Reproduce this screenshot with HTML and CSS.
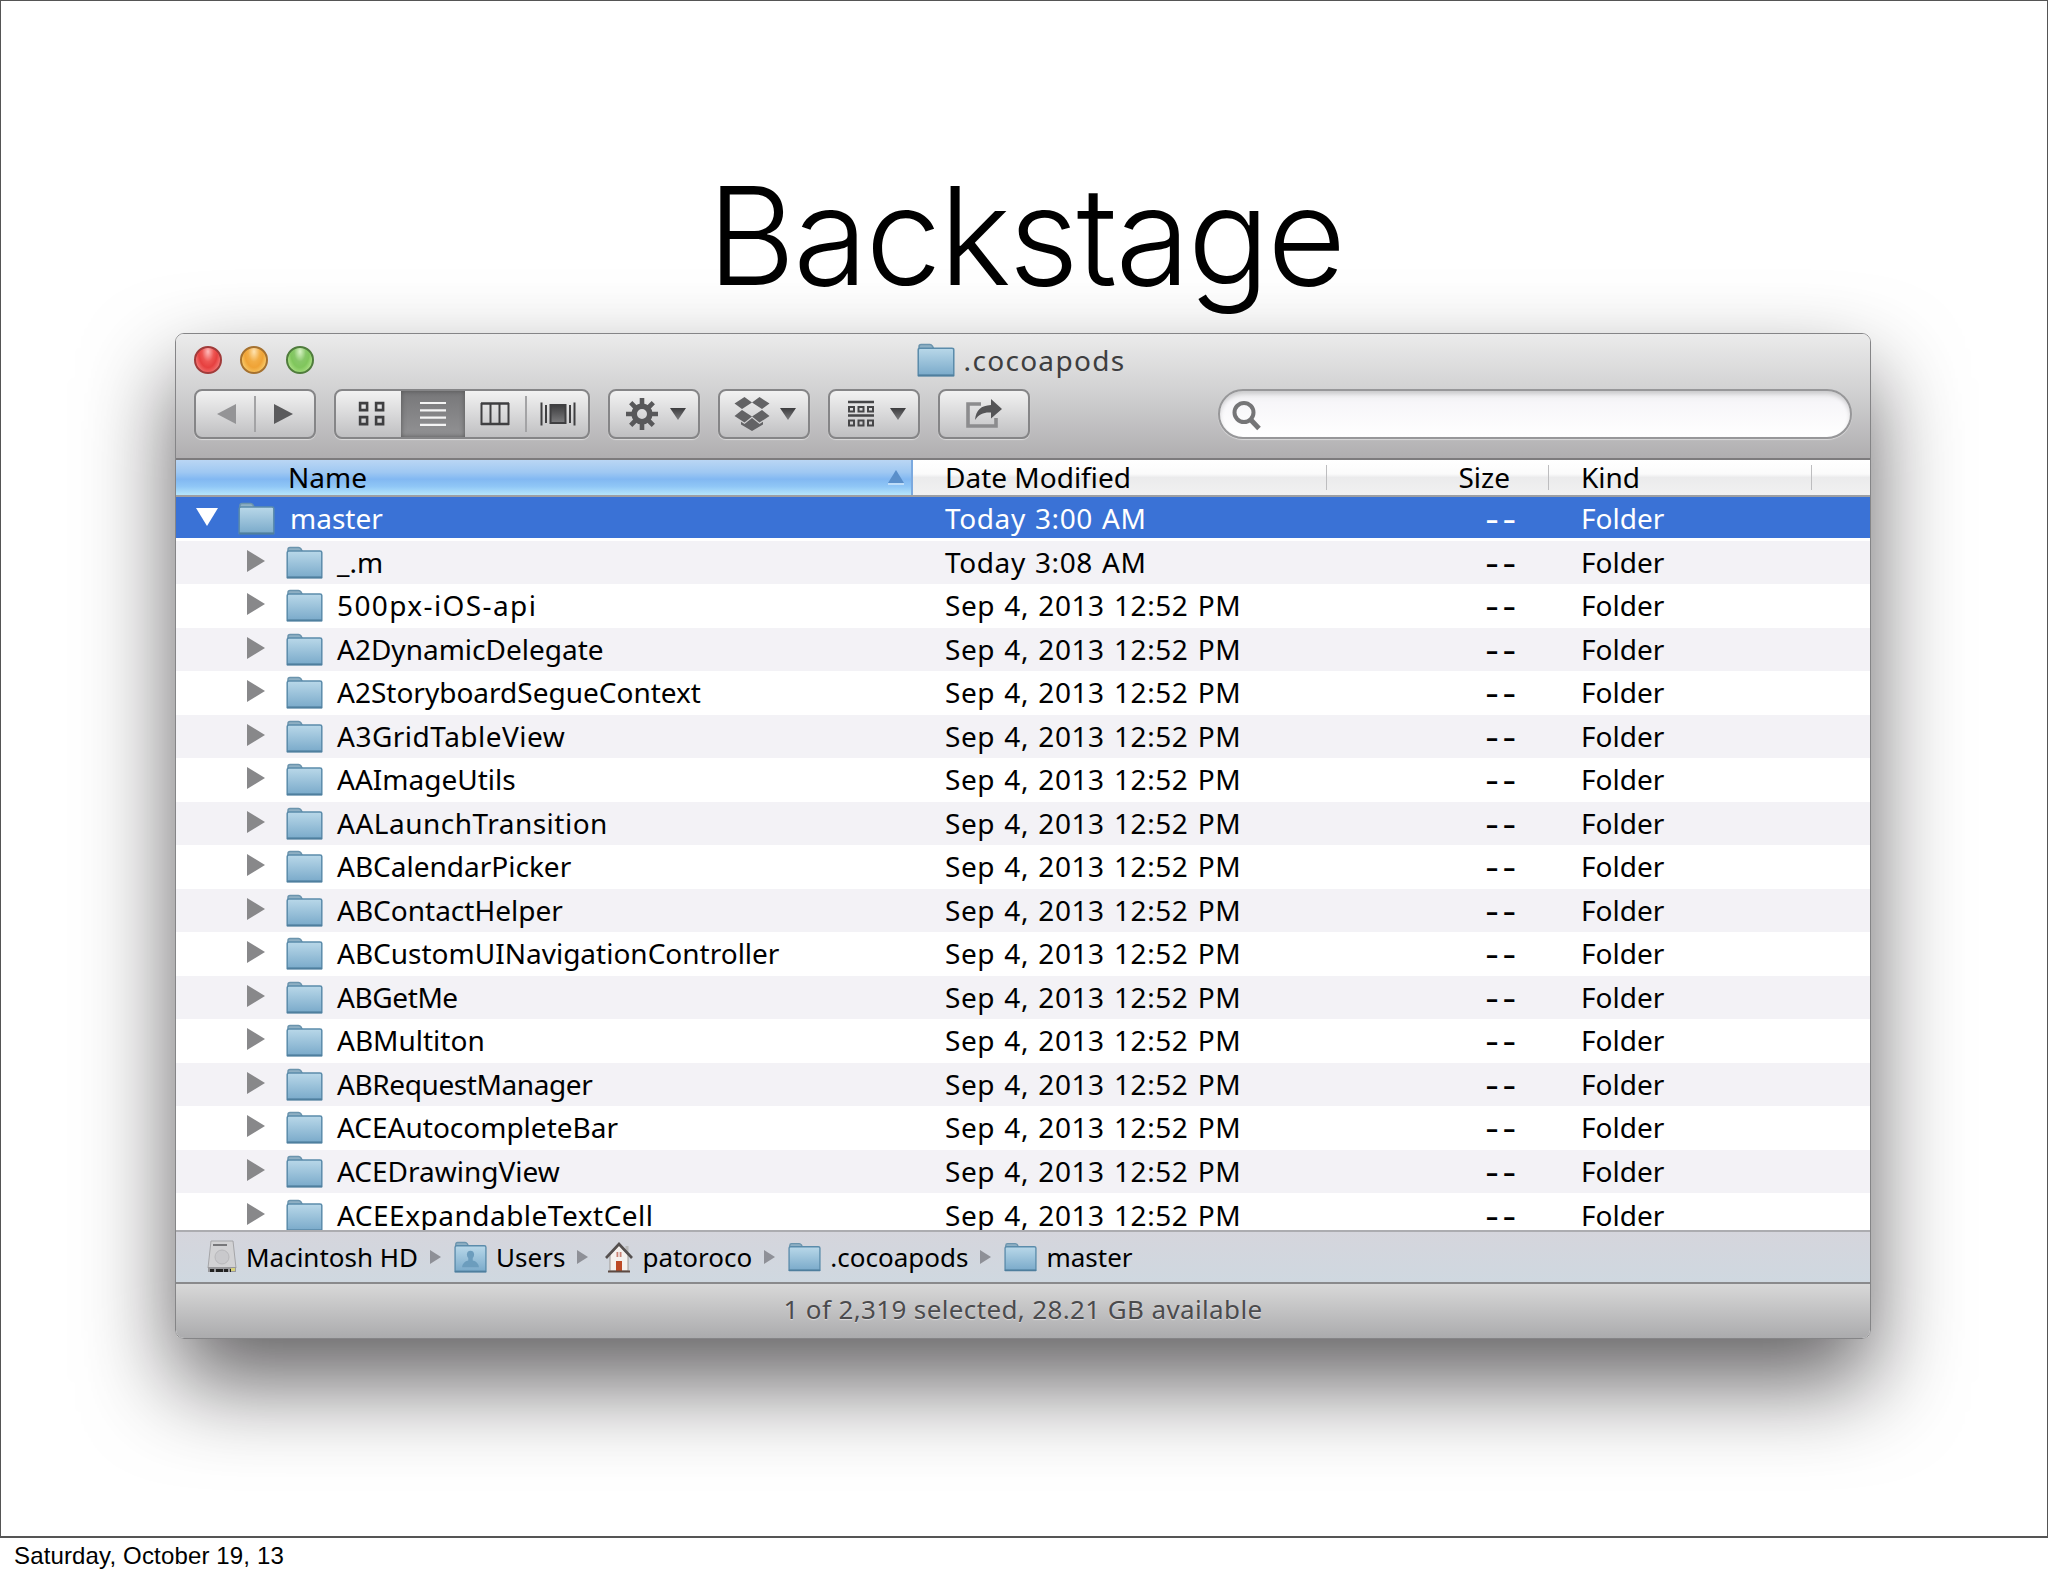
FILE: index.html
```
<!DOCTYPE html>
<html lang="en">
<head>
    <meta charset="UTF-8">
    <meta name="viewport" content="width=device-width, initial-scale=1.0">
    <title>Backstage</title>
    <link rel="stylesheet" href="styles.css">
</head>
<body>
    <!-- Shared icons -->
    <svg class="defs" width="0" height="0">
        <defs>
            <linearGradient id="folderFill" x1="0" y1="0" x2="0" y2="1">
                <stop offset="0" stop-color="#b9d8e9"/>
                <stop offset="1" stop-color="#7aaaca"/>
            </linearGradient>
            <linearGradient id="iconFill" x1="0" y1="0" x2="0" y2="1">
                <stop offset="0" stop-color="#3c3c3e"/>
                <stop offset="1" stop-color="#7c7c7e"/>
            </linearGradient>
            <symbol id="folder" viewBox="0 0 37 33">
                <path d="M2 6V3.500Q2 1.500 4 1.500H12.500Q14 1.500 15 3L16.500 6Z" fill="#8fb0c4" stroke="#6b94ad" stroke-width="1.500"/>
                <path d="M1.200 6.500Q1.200 5 3 5H34Q35.800 5 35.800 6.500V31.500H1.200Z" fill="url(#folderFill)" stroke="#5b8cab" stroke-width="1.500"/>
                <path d="M1 31.600H36" stroke="#4f7f9e" stroke-width="2"/>
            </symbol>
            <symbol id="arrow" viewBox="0 0 18 22">
                <path d="M0 0L18 11L0 22Z" fill="#88888a"/>
            </symbol>
            <symbol id="sep" viewBox="0 0 11 14">
                <path d="M0 0L11 7L0 14Z" fill="#8e9097"/>
            </symbol>
            <symbol id="drop" viewBox="0 0 16 12">
                <path d="M0 0H16L8 12Z" fill="url(#iconFill)"/>
            </symbol>
        </defs>
    </svg>

    <div class="slide">
        <h1>Backstage</h1>

        <div class="window">
            <div class="top">
                <div class="titlebar">
                    <div class="lights">
                        <span class="light red"></span>
                        <span class="light yellow"></span>
                        <span class="light green"></span>
                    </div>
                    <div class="title">
                        <svg class="folder"><use href="#folder"/></svg>
                        <span>.cocoapods</span>
                    </div>
                </div>
                <div class="toolbar">
                    <div class="group nav">
                        <span class="seg"><svg width="20" height="22"><path d="M20 1V21L1 11Z" fill="#949496"/></svg></span>
                        <span class="line"></span>
                        <span class="seg"><svg width="20" height="22"><path d="M0 1V21L19 11Z" fill="#5a5a5c"/></svg></span>
                    </div>
                    <div class="group views">
                        <span class="seg">
                            <svg width="28" height="26" fill="none" stroke="#3f3f41" stroke-width="2.600">
                                <path d="M2.100 2.100h7v7h-7zM18.100 2.100h7v7h-7zM2.100 16.100h7v7h-7zM18.100 16.100h7v7h-7z"/>
                            </svg>
                        </span>
                        <span class="seg on">
                            <svg width="28" height="26" stroke="#f4f4f4" stroke-width="2.200">
                                <path d="M1 2H27M1 9.300H27M1 16.600H27M1 23.900H27"/>
                            </svg>
                        </span>
                        <span class="seg">
                            <svg width="30" height="26" fill="none" stroke="#3f3f41" stroke-width="2">
                                <path d="M1 2.500H29M1 23H29" stroke-width="2.600"/>
                                <path d="M1.500 2V24M10.500 2V24M19.500 2V24M28.500 2V24"/>
                            </svg>
                        </span>
                        <span class="line"></span>
                        <span class="seg">
                            <svg width="36" height="26" fill="none" stroke="#3f3f41" stroke-width="2">
                                <path d="M1.500 1.500V24.500M6 4V22M30 4V22M34.500 1.500V24.500"/>
                                <rect x="10.500" y="4" width="15" height="18" fill="url(#iconFill)"/>
                            </svg>
                        </span>
                    </div>
                    <div class="group menu">
                        <svg width="34" height="34" viewBox="-17 -17 34 34">
                            <g stroke="#58585a" stroke-width="4.600">
                                <path d="M0 -16V-9M0 9V16M-16 0H-9M9 0H16"/>
                                <path d="M-11.300 -11.300L-6 -6M11.300 -11.300L6 -6M-11.300 11.300L-6 6M11.300 11.300L6 6"/>
                            </g>
                            <circle r="7.800" fill="none" stroke="#58585a" stroke-width="5.600"/>
                        </svg>
                        <svg class="drop"><use href="#drop"/></svg>
                    </div>
                    <div class="group menu dropbox">
                        <svg width="36" height="34" viewBox="0 0 36 34" fill="#636365">
                            <path d="M10.500 0L18 5.500L8 12L0.500 6.500ZM25.500 0L18 5.500L28 12L35.500 6.500ZM8 13L18 19.500L10.500 25.500L0.500 19ZM28 13L18 19.500L25.500 25.500L35.500 19ZM18 21L25.500 27L29 24.800V27.500L18 34L7 27.500V24.800L10.500 27Z"/>
                        </svg>
                        <svg class="drop"><use href="#drop"/></svg>
                    </div>
                    <div class="group menu arrange">
                        <svg width="26" height="28" fill="none" stroke="#464648" stroke-width="2">
                            <path d="M0 2H26M0 15.500H26" stroke-width="2.400"/>
                            <path d="M1 7h5v4.500h-5zM10.500 7h5v4.500h-5zM20 7h5v4.500h-5zM1 20.500h5v5h-5zM10.500 20.500h5v5h-5zM20 20.500h5v5h-5z"/>
                        </svg>
                        <svg class="drop"><use href="#drop"/></svg>
                    </div>
                    <div class="group share">
                        <svg width="40" height="32" viewBox="0 0 40 32">
                            <path d="M17 6H4V28H32V20" fill="none" stroke="#8c8c8e" stroke-width="3.600"/>
                            <path d="M11 22C12 12 17 7.500 27 7V1L38 11L27 20.500V14.500C20 14 15 16 11 22Z" fill="#555557"/>
                        </svg>
                    </div>
                    <div class="search">
                        <svg width="32" height="34" fill="none" stroke="#757577">
                            <circle cx="12" cy="12.500" r="9.500" stroke-width="4"/>
                            <path d="M18 19L27 28.500" stroke-width="5"/>
                        </svg>
                    </div>
                </div>
            </div>

            <div class="header">
                <span class="col-name">Name <svg width="16" height="15"><path d="M8 0L16 13H0Z" fill="#5a8fca"/><path d="M0 14H16" stroke="#cfe6fa" stroke-width="1.500"/></svg></span>
                <span class="col-date">Date Modified</span>
                <span class="col-size">Size</span>
                <span class="col-kind">Kind</span>
            </div>

            <div class="list">
                <div class="row selected"><svg class="arrow" viewBox="0 0 22 18"><path d="M0 0H22L11 18Z" fill="#fff"/></svg><svg class="folder"><use href="#folder"/></svg><span class="name">master</span><span class="date">Today 3:00 AM</span><span class="size">--</span><span class="kind">Folder</span></div>
                <div class="row"><svg class="arrow"><use href="#arrow"/></svg><svg class="folder"><use href="#folder"/></svg><span class="name">_.m</span><span class="date">Today 3:08 AM</span><span class="size">--</span><span class="kind">Folder</span></div>
                <div class="row"><svg class="arrow"><use href="#arrow"/></svg><svg class="folder"><use href="#folder"/></svg><span class="name wide">500px-iOS-api</span><span class="date">Sep 4, 2013 12:52 PM</span><span class="size">--</span><span class="kind">Folder</span></div>
                <div class="row"><svg class="arrow"><use href="#arrow"/></svg><svg class="folder"><use href="#folder"/></svg><span class="name">A2DynamicDelegate</span><span class="date">Sep 4, 2013 12:52 PM</span><span class="size">--</span><span class="kind">Folder</span></div>
                <div class="row"><svg class="arrow"><use href="#arrow"/></svg><svg class="folder"><use href="#folder"/></svg><span class="name">A2StoryboardSegueContext</span><span class="date">Sep 4, 2013 12:52 PM</span><span class="size">--</span><span class="kind">Folder</span></div>
                <div class="row"><svg class="arrow"><use href="#arrow"/></svg><svg class="folder"><use href="#folder"/></svg><span class="name loose">A3GridTableView</span><span class="date">Sep 4, 2013 12:52 PM</span><span class="size">--</span><span class="kind">Folder</span></div>
                <div class="row"><svg class="arrow"><use href="#arrow"/></svg><svg class="folder"><use href="#folder"/></svg><span class="name">AAImageUtils</span><span class="date">Sep 4, 2013 12:52 PM</span><span class="size">--</span><span class="kind">Folder</span></div>
                <div class="row"><svg class="arrow"><use href="#arrow"/></svg><svg class="folder"><use href="#folder"/></svg><span class="name loose">AALaunchTransition</span><span class="date">Sep 4, 2013 12:52 PM</span><span class="size">--</span><span class="kind">Folder</span></div>
                <div class="row"><svg class="arrow"><use href="#arrow"/></svg><svg class="folder"><use href="#folder"/></svg><span class="name">ABCalendarPicker</span><span class="date">Sep 4, 2013 12:52 PM</span><span class="size">--</span><span class="kind">Folder</span></div>
                <div class="row"><svg class="arrow"><use href="#arrow"/></svg><svg class="folder"><use href="#folder"/></svg><span class="name">ABContactHelper</span><span class="date">Sep 4, 2013 12:52 PM</span><span class="size">--</span><span class="kind">Folder</span></div>
                <div class="row"><svg class="arrow"><use href="#arrow"/></svg><svg class="folder"><use href="#folder"/></svg><span class="name">ABCustomUINavigationController</span><span class="date">Sep 4, 2013 12:52 PM</span><span class="size">--</span><span class="kind">Folder</span></div>
                <div class="row"><svg class="arrow"><use href="#arrow"/></svg><svg class="folder"><use href="#folder"/></svg><span class="name tight">ABGetMe</span><span class="date">Sep 4, 2013 12:52 PM</span><span class="size">--</span><span class="kind">Folder</span></div>
                <div class="row"><svg class="arrow"><use href="#arrow"/></svg><svg class="folder"><use href="#folder"/></svg><span class="name">ABMultiton</span><span class="date">Sep 4, 2013 12:52 PM</span><span class="size">--</span><span class="kind">Folder</span></div>
                <div class="row"><svg class="arrow"><use href="#arrow"/></svg><svg class="folder"><use href="#folder"/></svg><span class="name tight">ABRequestManager</span><span class="date">Sep 4, 2013 12:52 PM</span><span class="size">--</span><span class="kind">Folder</span></div>
                <div class="row"><svg class="arrow"><use href="#arrow"/></svg><svg class="folder"><use href="#folder"/></svg><span class="name">ACEAutocompleteBar</span><span class="date">Sep 4, 2013 12:52 PM</span><span class="size">--</span><span class="kind">Folder</span></div>
                <div class="row"><svg class="arrow"><use href="#arrow"/></svg><svg class="folder"><use href="#folder"/></svg><span class="name">ACEDrawingView</span><span class="date">Sep 4, 2013 12:52 PM</span><span class="size">--</span><span class="kind">Folder</span></div>
                <div class="row"><svg class="arrow"><use href="#arrow"/></svg><svg class="folder"><use href="#folder"/></svg><span class="name loose">ACEExpandableTextCell</span><span class="date">Sep 4, 2013 12:52 PM</span><span class="size">--</span><span class="kind">Folder</span></div>
            </div>

            <div class="pathbar">
                <span class="crumb hd">
                    <svg width="30" height="34" viewBox="0 0 30 34">
                        <path d="M4 1H26L29 28H1Z" fill="#d2d2d4" stroke="#a5a5a8"/>
                        <path d="M6 5H20" stroke="#77777a" stroke-width="2"/>
                        <circle cx="15" cy="17" r="7" fill="#c9c9cc" stroke="#b8b8bb"/>
                        <path d="M1 27H29V32H1Z" fill="#98989b"/>
                        <path d="M3 30.500H24" stroke="#222" stroke-width="3" stroke-dasharray="4 2 7 1"/>
                        <path d="M24 28H28V31H24Z" fill="#d8d27a"/>
                    </svg>
                    Macintosh HD
                </span>
                <svg class="sep"><use href="#sep"/></svg>
                <span class="crumb users">
                    <svg width="33" height="32" viewBox="0 0 37 33" preserveAspectRatio="none"><use href="#folder" width="37" height="33"/><circle cx="18.500" cy="14" r="4" fill="#6c9dbd"/><path d="M9 27Q10 21 16 20V17H21V20Q27 21 28 27Z" fill="#6c9dbd"/></svg>
                    Users
                </span>
                <svg class="sep"><use href="#sep"/></svg>
                <span class="crumb home">
                    <svg width="28" height="32" viewBox="0 0 28 32">
                        <path d="M5 14L14 4L23 14V30H5Z" fill="#f5f1ee" stroke="#a09a96"/>
                        <path d="M22 5V11" stroke="#b9b9b9" stroke-width="3"/>
                        <path d="M1 17L14 3L27 17" fill="none" stroke="#55504f" stroke-width="2.600"/>
                        <path d="M11.500 11H13.300V16H11.500ZM14.700 11H16.500V16H14.700Z" fill="#c98274"/>
                        <path d="M11 20H17V30H11Z" fill="#bd4a25"/>
                        <path d="M3 30.500H25" stroke="#5d4a42" stroke-width="2"/>
                    </svg>
                    patoroco
                </span>
                <svg class="sep"><use href="#sep"/></svg>
                <span class="crumb"><svg class="folder"><use href="#folder"/></svg>.cocoapods</span>
                <svg class="sep"><use href="#sep"/></svg>
                <span class="crumb"><svg class="folder"><use href="#folder"/></svg>master</span>
            </div>

            <div class="status"><span>1 of 2,319 selected, 28.21 GB available</span></div>
        </div>
    </div>

    <div class="date-line">Saturday, October 19, 13</div>
</body>
</html>
```

FILE: styles.css
```
* {
    box-sizing: border-box;
}

body {
    margin: 0;
    width: 2048px;
    height: 1576px;
    background: #fff;
    color: #000;
    font-family: "Noto Sans", "Open Sans", sans-serif;
    overflow: hidden;
}

svg {
    display: block;
    flex: none;
}

.defs {
    position: absolute;
}

.slide {
    height: 1538px;
    border: 1px solid #555;
    border-bottom-width: 2px;
    overflow: hidden;
}

h1 {
    margin: 0;
    height: 332px;
    padding: 153px 0 0 3px;
    font-family: Inter, "Liberation Sans", sans-serif;
    font-size: 136px;
    line-height: 164px;
    font-weight: 300;
    letter-spacing: -2.400px;
    text-align: center;
}

.window {
    width: 1696px;
    height: 1006px;
    margin-left: 174px;
    border: 1px solid #858587;
    border-radius: 9px;
    overflow: hidden;
    font-size: 28px;
    box-shadow: 0 44px 90px rgba(10, 6, 10, 0.63);
}

/* Title bar and toolbar */
.top {
    height: 126px;
    background: linear-gradient(#ebebeb, #cfcfd0 50%, #b0aeb0);
    border-bottom: 2px solid #7d7b7d;
}

.titlebar {
    height: 52px;
    display: grid;
    grid-template-columns: 1fr auto 1fr;
    align-items: center;
}

.lights {
    display: flex;
    gap: 18px;
    padding-left: 18px;
}

.light {
    width: 28px;
    height: 28px;
    border-radius: 50%;
    border: 2px solid;
}

.red {
    background: radial-gradient(ellipse at 50% 15%, #fbb 0, #ee5552 35%, #e6403f 55%, #ff9e9c 100%);
    border-color: #a13b3a;
}

.yellow {
    background: radial-gradient(ellipse at 50% 15%, #ffe3b0 0, #f2ad45 35%, #efa336 55%, #ffe890 100%);
    border-color: #a5712f;
}

.green {
    background: radial-gradient(ellipse at 50% 15%, #d9f3c6 0, #87c768 35%, #80c65c 55%, #cdf5a5 100%);
    border-color: #4f7c3c;
}

.title {
    display: flex;
    align-items: center;
    gap: 9px;
    padding-right: 4px;
    color: #3e3e40;
    letter-spacing: 1.300px;
}

.title .folder {
    width: 38px;
    height: 34px;
}

.toolbar {
    display: flex;
    padding: 3px 18px 0 18px;
}

.group {
    height: 50px;
    border: 2px solid #858587;
    border-radius: 8px;
    background: linear-gradient(#f2f2f2, #d9d9da 50%, #bfbfc1);
    box-shadow: 0 1px 1px rgba(255, 255, 255, 0.5);
    display: flex;
    align-items: center;
}

.seg {
    flex: 1;
    height: 100%;
    display: flex;
    align-items: center;
    justify-content: center;
}

.seg.on {
    flex: 0 0 64px;
    background: linear-gradient(#777779, #929294);
    box-shadow: inset 0 0 5px #555;
}

.line {
    width: 2px;
    height: 36px;
    background: #a3a3a5;
}

.nav {
    width: 122px;
}

.nav .seg:first-child {
    flex: 0 0 58px;
    padding-left: 1px;
}

.nav .seg:last-child {
    padding-right: 3px;
}

.views {
    width: 256px;
    margin-left: 18px;
}

.views .seg:first-child {
    flex: 0 0 65px;
    padding-left: 6px;
}

.views .seg:nth-child(3) {
    flex: 0 0 60px;
}

.menu {
    width: 92px;
    margin-left: 18px;
    padding-left: 15px;
    gap: 11px;
}

.drop {
    width: 16px;
    height: 12px;
}

.dropbox {
    padding-left: 14px;
    gap: 10px;
}

.arrange {
    padding-left: 18px;
    gap: 16px;
}

.share {
    width: 92px;
    margin-left: 18px;
    justify-content: center;
}

.search {
    width: 634px;
    height: 50px;
    margin-left: auto;
    padding: 9px 0 0 12px;
    border: 2px solid #979799;
    border-radius: 25px;
    background: linear-gradient(#ececee, #f7f6f9 25%, #fff);
    box-shadow: inset 0 3px 4px rgba(0, 0, 0, 0.15), 0 1px 1px rgba(255, 255, 255, 0.5);
}

/* Column header */
.header {
    display: grid;
    grid-template-columns: 737px 415px 222px 1fr;
    height: 37px;
    border-bottom: 2px solid #9d9fa3;
    background: linear-gradient(#fff 0, #fbfbfb 40%, #ebebec 50%, #f1f1f1);
    line-height: 35px;
}

.header span {
    position: relative;
}

.col-name {
    padding: 0 7px 0 112px;
    display: flex;
    align-items: center;
    justify-content: space-between;
    background: linear-gradient(#bad6f4, #9fc8f2 35%, #82b8f2 55%, #8fc6f6 75%, #b5e5fb);
    border-right: 2px solid #7ba9df;
}

.col-date {
    padding-left: 32px;
}

.col-size {
    padding-right: 40px;
    text-align: right;
}

.col-kind {
    padding-left: 31px;
}

/* column dividers */
.col-date::after,
.col-size::after,
.col-kind::after {
    content: "";
    position: absolute;
    right: 1px;
    top: 5px;
    width: 1.500px;
    height: 25px;
    background: #bdbdbf;
}

.col-kind::after {
    right: 58px;
}

/* File list */
.list {
    height: 733px;
    overflow: hidden;
    background: #fff;
}

.row {
    display: grid;
    grid-template-columns: 18px 39px 619px 390px 213px 1fr;
    align-items: center;
    height: 43.530px;
    padding-left: 71px;
    line-height: 43px;
    white-space: nowrap;
}

.row:nth-child(even) {
    background: #f3f2f6;
}

.row .arrow {
    width: 18px;
    height: 22px;
    margin-top: -3px;
}

.row .folder {
    width: 37px;
    height: 33px;
    margin-left: 21px;
}

.name {
    padding-left: 33px;
}

.name.wide {
    letter-spacing: 1.400px;
}

.name.loose {
    letter-spacing: 0.500px;
}

.name.tight {
    letter-spacing: -0.400px;
}

.date {
    padding-left: 22px;
    letter-spacing: 0.600px;
    word-spacing: 1.300px;
}

.size {
    padding-right: 4px;
    text-align: right;
    letter-spacing: 3px;
    font-weight: 500;
    transform: scaleX(1.450);
    transform-origin: right;
}

.kind {
    padding-left: 55px;
}

.row.selected {
    grid-template-columns: 22px 39px 666px 390px 213px 1fr;
    padding-left: 20px;
    background: linear-gradient(#3a72d6, #3a72d6) no-repeat 0 0 / 100% 41px;
    color: #fff;
}

.selected .arrow {
    width: 22px;
    height: 18px;
}

.selected .folder {
    margin-left: 20px;
}

/* Path bar */
.pathbar {
    display: flex;
    align-items: center;
    height: 54px;
    padding-left: 31px;
    border-top: 2px solid #acacb0;
    border-bottom: 2px solid #8a8a8c;
    background: linear-gradient(#d5d5dc, #cfd8e0);
    font-size: 26px;
    line-height: 50px;
}

.crumb {
    display: flex;
    align-items: center;
    gap: 9px;
}

.sep {
    width: 11px;
    height: 14px;
    margin: 0 13px 0 12px;
}

.crumb.home {
    margin-left: 4px;
}

.pathbar .folder {
    width: 33px;
    height: 32px;
}

/* Status bar */
.status {
    height: 54px;
    background: linear-gradient(#d8d8d8, #ababad);
    color: #4b4b4d;
    text-align: center;
    line-height: 51px;
    font-size: 26px;
    letter-spacing: 0.370px;
    text-shadow: 0 1px 1px rgba(255, 255, 255, 0.5);
}

.date-line {
    padding-left: 14px;
    font-family: "Liberation Sans", Arial, sans-serif;
    font-size: 24px;
    line-height: 35px;
    letter-spacing: 0.150px;
}
```
